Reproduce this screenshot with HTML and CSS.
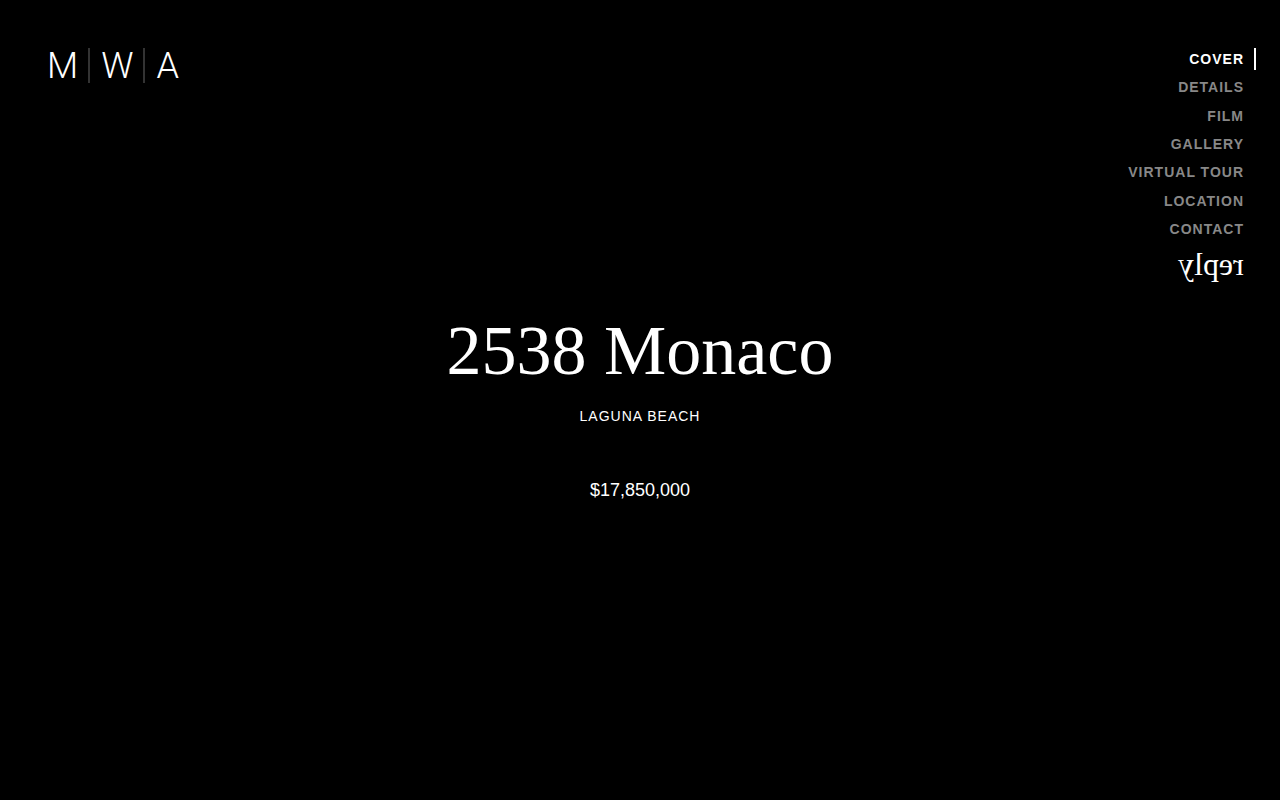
FILE: index.html
```html
<!DOCTYPE html>
<html lang="en">
<head>
    <meta charset="UTF-8">
    <meta name="viewport" content="width=device-width, initial-scale=1.0">
    <title>2538 Monaco</title>
    <link rel="stylesheet" href="styles.css">
</head>
<body>
    <header class="header">
        <a href="#cover" class="logo" aria-label="MWA">
            <span>M</span>
            <span>W</span>
            <span>A</span>
        </a>
        <nav class="menu">
            <ul>
                <li class="on"><a href="#cover">Cover</a></li>
                <li><a href="#details">Details</a></li>
                <li><a href="#film">Film</a></li>
                <li><a href="#gallery">Gallery</a></li>
                <li><a href="#tour">Virtual Tour</a></li>
                <li><a href="#location">Location</a></li>
                <li><a href="#contact">Contact</a></li>
            </ul>
            <button class="share">reply</button>
        </nav>
    </header>

    <main id="cover" class="cover">
        <h1>2538 Monaco</h1>
        <p class="city">Laguna Beach</p>
        <p class="price">$17,850,000</p>
    </main>
</body>
</html>
```

FILE: styles.css
```css
*{ margin: 0; padding: 0; box-sizing: border-box;}
ul,li{ list-style: none;}
a{ color: inherit; text-decoration: none;}

body{ min-height: 100vh; background-color: #000; color: #fff; font-family: "Liberation Sans", Arial, sans-serif;}

/* header */
.header{ position: absolute; top: 0; left: 0; width: 100%; display: flex; justify-content: space-between; align-items: flex-start; padding: 48px 24px 0 47px;}
.logo{ display: flex; font-family: Roboto, sans-serif; font-weight: 300; font-size: 36px; line-height: 37px;}
.logo span{ height: 35px;}
.logo span + span{ margin-left: 10px; padding-left: 11px; border-left: 2px solid #333;}

.menu{ display: flex; flex-direction: column; align-items: flex-end;}
.menu ul{ display: flex; flex-direction: column; justify-content: space-between; height: 192px;}
.menu li{ padding-right: 10px; border-right: 2px solid transparent; color: #888; font-size: 14px; font-weight: bold; line-height: 22px; letter-spacing: 1px; text-align: right; text-transform: uppercase;}
.menu li a{ display: block;}
.menu li.on{ border-color: #fff; color: #fff;}
.share{ margin: 8px 12px 0 0; border: none; background: none; color: #fff; font-family: "Liberation Serif", serif; font-size: 32px; line-height: 32px; transform: scaleX(-1); cursor: pointer;}

/* cover */
.cover{ display: flex; flex-direction: column; align-items: center; justify-content: center; min-height: 100vh; padding-top: 13px; text-align: center;}
.cover h1{ font-family: "Liberation Serif", serif; font-size: 70px; font-weight: normal; line-height: 80px;}
.city{ margin-top: 15px; font-size: 14px; line-height: 20px; letter-spacing: 1px; text-transform: uppercase;}
.price{ margin-top: 52px; font-size: 18px; line-height: 24px;}
```
